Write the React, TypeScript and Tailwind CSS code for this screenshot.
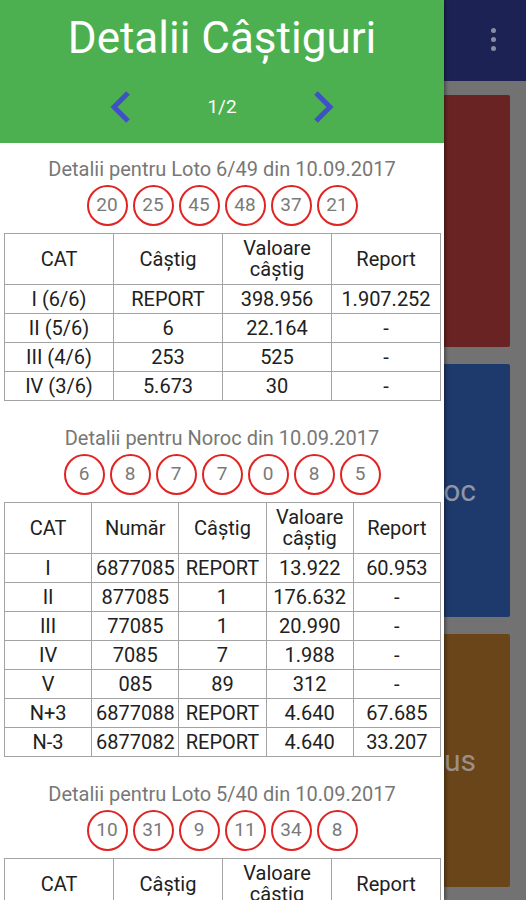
import React from "react";

type Section = {
  title: string;
  balls: string[];
  head: React.ReactNode[];
  rows: string[][];
};

const valoare = (
  <>
    Valoare
    <br />
    câștig
  </>
);

const sections: Section[] = [
  {
    title: "Detalii pentru Loto 6/49 din 10.09.2017",
    balls: ["20", "25", "45", "48", "37", "21"],
    head: ["CAT", "Câștig", valoare, "Report"],
    rows: [
      ["I (6/6)", "REPORT", "398.956", "1.907.252"],
      ["II (5/6)", "6", "22.164", "-"],
      ["III (4/6)", "253", "525", "-"],
      ["IV (3/6)", "5.673", "30", "-"],
    ],
  },
  {
    title: "Detalii pentru Noroc din 10.09.2017",
    balls: ["6", "8", "7", "7", "0", "8", "5"],
    head: ["CAT", "Număr", "Câștig", valoare, "Report"],
    rows: [
      ["I", "6877085", "REPORT", "13.922", "60.953"],
      ["II", "877085", "1", "176.632", "-"],
      ["III", "77085", "1", "20.990", "-"],
      ["IV", "7085", "7", "1.988", "-"],
      ["V", "085", "89", "312", "-"],
      ["N+3", "6877088", "REPORT", "4.640", "67.685"],
      ["N-3", "6877082", "REPORT", "4.640", "33.207"],
    ],
  },
  {
    title: "Detalii pentru Loto 5/40 din 10.09.2017",
    balls: ["10", "31", "9", "11", "34", "8"],
    head: ["CAT", "Câștig", valoare, "Report"],
    rows: [],
  },
];

function ResultSection({ s, first }: { s: Section; first: boolean }) {
  return (
    <div className={first ? "pt-[16px]" : "pt-[27px]"}>
      <div className="text-center text-[20px] leading-[20px] text-[#777777]">{s.title}</div>
      <div className="mt-[6px] flex justify-center gap-[5px]">
        {s.balls.map((b, i) => (
          <div
            key={i}
            className="w-[41px] h-[41px] rounded-full border-2 border-[#e02424] flex items-center justify-center text-[19px] text-[#7a7a7a]"
          >
            {b}
          </div>
        ))}
      </div>
      <table className="mt-[7px] ml-[4px] w-[437px] table-fixed border-collapse text-[20px] text-[#212121]">
        <thead>
          <tr>
            {s.head.map((h, i) => (
              <td key={i} className="h-[51px] p-0 text-center leading-[21px] border border-[#a3a3a3]">
                {h}
              </td>
            ))}
          </tr>
        </thead>
        <tbody>
          {s.rows.map((r, i) => (
            <tr key={i}>
              {r.map((c, j) => (
                <td key={j} className="h-[29px] p-0 text-center leading-[22px] border border-[#a3a3a3] whitespace-nowrap">
                  {c}
                </td>
              ))}
            </tr>
          ))}
        </tbody>
      </table>
    </div>
  );
}

export default function App() {
  return (
    <div className="relative w-[526px] h-[900px] overflow-hidden bg-[#727272] font-['Roboto',sans-serif]">
      {/* page behind the drawer (dimmed) */}
      <div className="h-[81px] bg-[#1c2354] flex items-center justify-end pr-[30px]">
        <div className="flex flex-col gap-[4px] pb-[2px]">
          <span className="w-[5px] h-[5px] rounded-full bg-[#8a8ca0]" />
          <span className="w-[5px] h-[5px] rounded-full bg-[#8a8ca0]" />
          <span className="w-[5px] h-[5px] rounded-full bg-[#8a8ca0]" />
        </div>
      </div>
      <div className="flex flex-col gap-[17px] pt-[14px] px-[16px]">
        <div className="h-[252px] rounded-[2px] bg-[#6a2323] flex items-center pl-[150px] text-[30px] text-[#8f8f99]">
          Loto
        </div>
        <div className="h-[253px] rounded-[2px] bg-[#1e3a6c] flex items-center justify-end pr-[34px] text-[30px] text-[#8f96a6]">
          Noroc
        </div>
        <div className="h-[253px] rounded-[2px] bg-[#6a4519] flex items-center justify-end pr-[34px] text-[30px] text-[#9a9088]">
          Noroc Plus
        </div>
      </div>

      {/* drawer */}
      <div className="absolute left-0 top-0 w-[444px] h-[900px] bg-white overflow-hidden shadow-[2px_0_3px_rgba(0,0,0,0.35)]">
        <div className="h-[143px] bg-[#4caf50] flex flex-col items-center">
          <div className="mt-[13px] text-[44px] leading-[50px] text-white">Detalii Câștiguri</div>
          <div className="mt-[27px] flex items-center">
            <svg width="24" height="34" viewBox="0 0 24 34" className="mr-[74px]">
              <polyline points="19,3 5,17 19,31" fill="none" stroke="#3f51c4" strokeWidth="5" />
            </svg>
            <span className="text-[19px] text-white">1/2</span>
            <svg width="24" height="34" viewBox="0 0 24 34" className="ml-[74px]">
              <polyline points="5,3 19,17 5,31" fill="none" stroke="#3f51c4" strokeWidth="5" />
            </svg>
          </div>
        </div>
        {sections.map((s, i) => (
          <ResultSection key={i} s={s} first={i === 0} />
        ))}
      </div>
    </div>
  );
}
